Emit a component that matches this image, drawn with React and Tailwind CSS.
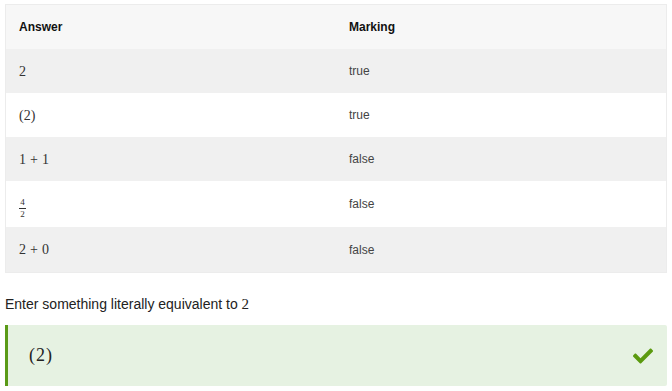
import React from "react";
import { FaCheck } from "react-icons/fa";

const mathFont = { fontFamily: '"Liberation Serif", "Times New Roman", serif' };

function Sum({ a, b }) {
  return (
    <span className="inline-flex items-baseline">
      <span>{a}</span>
      <span className="mx-[4px]">+</span>
      <span>{b}</span>
    </span>
  );
}

const rows = [
  { answer: <span>2</span>, marking: "true", h: "h-[44px]" },
  { answer: <span>(2)</span>, marking: "true", h: "h-[44px]" },
  { answer: <Sum a="1" b="1" />, marking: "false", h: "h-[44px]" },
  {
    answer: (
      <span className="inline-flex flex-col items-center leading-none text-[9px]">
        <span>4</span>
        <span className="block w-[7px] border-t border-[#333] my-[1px]"></span>
        <span>2</span>
      </span>
    ),
    marking: "false",
    h: "h-[46px]",
  },
  { answer: <Sum a="2" b="0" />, marking: "false", h: "h-[45px]" },
];

function App() {
  return (
    <div
      className="bg-white w-[672px] h-[391px] pt-[4px] px-[5px]"
      style={{ fontFamily: '"Liberation Sans", Arial, sans-serif' }}
    >
      <div className="border border-[#ececec] w-[662px]">
        <div className="grid grid-cols-2 h-[44px] bg-[#f7f7f7] items-center text-[12px] font-bold text-[#111]">
          <div className="pl-[13px]">Answer</div>
          <div className="pl-[13px]">Marking</div>
        </div>
        {rows.map((row, i) => (
          <div
            key={i}
            className={`grid grid-cols-2 items-center ${row.h} ${
              i % 2 === 0 ? "bg-[#f0f0f0]" : "bg-white"
            }`}
          >
            <div className="pl-[13px] text-[14px] text-[#333]" style={mathFont}>
              {row.answer}
            </div>
            <div className="pl-[13px] text-[12px] text-[#444]">{row.marking}</div>
          </div>
        ))}
      </div>

      <div className="mt-[21px] text-[14px] text-[#222] leading-[20px]">
        Enter something literally equivalent to{" "}
        <span className="text-[15px]" style={mathFont}>2</span>
      </div>

      <div className="mt-[11px] w-[662px] h-[61px] bg-[#e6f2e2] border-l-[3px] border-[#5a9a17] rounded-r-[2px] flex items-center justify-between pl-[21px] pr-[14px]">
        <span className="text-[18px] text-[#222] tracking-[1px]" style={mathFont}>
          (2)
        </span>
        <FaCheck className="text-[#5b9a0f] w-[20px] h-[20px]" />
      </div>
    </div>
  );
}

export default App;
